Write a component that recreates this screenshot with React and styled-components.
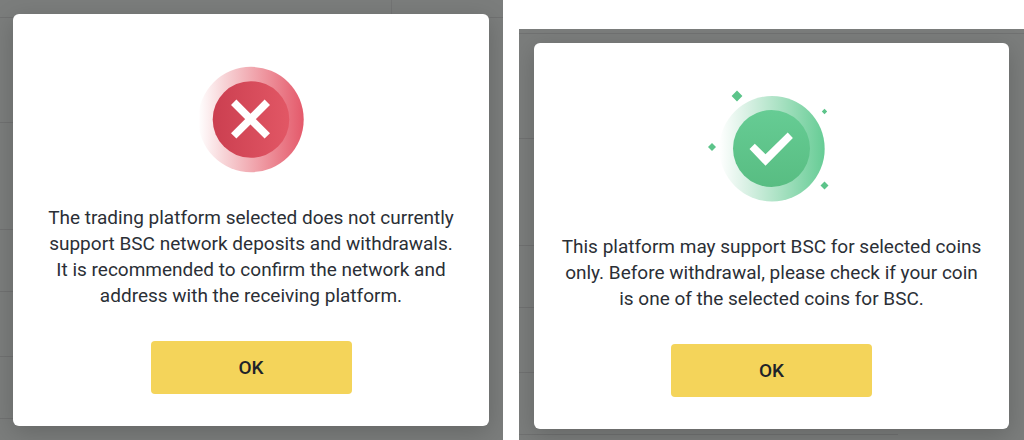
import React, { useId } from 'react'
import styled, { createGlobalStyle } from 'styled-components';


const GlobalStyle = createGlobalStyle`
    *, *::before, *::after {
        box-sizing: border-box;
    }
    body {
        margin: 0;
        background-color: #ffffff;
        font-family: Roboto, 'Liberation Sans', sans-serif;
    }
`

const Page = styled.main`
    display: grid;
    grid-template-columns: 503fr 505fr;
    column-gap: 16px;
    min-height: 100vh;
`

const Screen = styled.section`
    display: grid;
    grid-template-columns: minmax(0, 1fr);
    margin-top: ${props => props.$top}px;
    overflow: hidden;
    background-color: #7b7d7c;
`

const Listing = styled.div`
    grid-area: 1 / 1;
    height: 0;
`

const ListingHead = styled.div`
    display: flex;
    justify-content: flex-end;
    height: ${props => props.$height}px;
    border-bottom: 1px solid #707171;
`

const ListingCell = styled.div`
    width: 112px;
    border-left: 1px solid #737474;
`

const ListingRow = styled.div`
    width: 75%;
    height: ${props => props.$height}px;
    border-bottom: 1px solid #707171;
`

const Overlay = styled.div`
    grid-area: 1 / 1;
    z-index: 1;
    padding: 14px ${props => props.$right}px 11px ${props => props.$left}px;
`

const Dialog = styled.div`
    display: flex;
    flex-direction: column;
    align-items: center;
    padding: 53px 24px 32px;
    border-radius: 6px;
    background-color: #ffffff;
    box-shadow: 0 6px 24px rgba(0, 0, 0, 0.18);
`

const Icon = styled.svg`
    display: block;
    width: 106px;
    height: 106px;
    overflow: visible;
`

const Message = styled.p`
    margin: 32px 0;
    color: #2b2f36;
    font-size: 19px;
    line-height: 26px;
    text-align: center;
    white-space: nowrap;
`

const OkButton = styled.button`
    width: 201px;
    height: 53px;
    padding: 0;
    border: none;
    border-radius: 4px;
    background-color: #f4d45a;
    color: #1e2329;
    font-family: inherit;
    font-size: 19px;
    font-weight: 500;
    cursor: pointer;
`

const ErrorIcon = () => {
    const id = useId();

    return (
        <Icon viewBox="0 0 106 106" aria-hidden="true">
            <defs>
                <linearGradient id={`${id}ring`}>
                    <stop offset="0" stopColor="#ffffff" />
                    <stop offset="0.25" stopColor="#f7d3d6" />
                    <stop offset="0.6" stopColor="#ef9aa3" />
                    <stop offset="1" stopColor="#e4596a" />
                </linearGradient>
                <linearGradient id={`${id}disc`}>
                    <stop offset="0" stopColor="#cb3f50" />
                    <stop offset="1" stopColor="#e25765" />
                </linearGradient>
            </defs>
            <circle cx="53" cy="52.5" r="52.7" fill={`url(#${id}ring)`} />
            <circle cx="53" cy="52.5" r="38.3" fill={`url(#${id}disc)`} />
            <path d="M35.7 35.3 69.3 68.9M69.3 35.3 35.7 68.9" stroke="#ffffff" strokeWidth="7.6" />
        </Icon>
    )
}

const SuccessIcon = () => {
    const id = useId();

    return (
        <Icon viewBox="0 0 106 106" aria-hidden="true">
            <defs>
                <linearGradient id={`${id}ring`}>
                    <stop offset="0" stopColor="#ffffff" />
                    <stop offset="0.25" stopColor="#daf1e5" />
                    <stop offset="0.6" stopColor="#a5e0c0" />
                    <stop offset="1" stopColor="#66cc95" />
                </linearGradient>
                <linearGradient id={`${id}disc`} x2="0" y2="1">
                    <stop offset="0" stopColor="#66cc94" />
                    <stop offset="1" stopColor="#58bd82" />
                </linearGradient>
            </defs>
            <circle cx="53" cy="52.7" r="52.7" fill={`url(#${id}ring)`} />
            <circle cx="52.5" cy="52.5" r="38.5" fill={`url(#${id}disc)`} />
            <path d="M30.5 53 35.8 47.7 46.5 58.3 68.7 36.5 73.9 41.9 46.5 69.7z" fill="#ffffff" />
            <path
                d="M18-5.4 23.4 0 18 5.4 12.6 0zM105.5 12.8 108.2 15.5 105.5 18.2 102.8 15.5zM-7 47-3 51-7 55-11 51zM105.5 85.5 109.5 89.5 105.5 93.5 101.5 89.5z"
                fill="#5cc48a"
            />
        </Icon>
    )
}

const ROW_HEIGHTS = [105, 107, 62, 65, 62]

const Notice = ({ icon, lines, top, left, right, headHeight, hasColumns, id }) => {
    return (
        <Screen $top={top}>
            <Listing aria-hidden="true">
                <ListingHead $height={headHeight}>
                    {hasColumns && <ListingCell />}
                </ListingHead>
                {ROW_HEIGHTS.map((height, i) => <ListingRow key={i} $height={height} />)}
            </Listing>
            <Overlay $left={left} $right={right}>
                <Dialog role="alertdialog" aria-describedby={id}>
                    {icon}
                    <Message id={id}>
                        {lines.map((line, i) => (
                            <React.Fragment key={i}>
                                {i > 0 && <br />}
                                {line}
                            </React.Fragment>
                        ))}
                    </Message>
                    <OkButton type="button">OK</OkButton>
                </Dialog>
            </Overlay>
        </Screen>
    )
}

const App = () => {
    return (
        <>
        <GlobalStyle />
        <Page>
            <Notice
                id="unsupported"
                icon={<ErrorIcon />}
                top={0}
                left={13}
                right={14}
                headHeight={18}
                hasColumns
                lines={[
                    'The trading platform selected does not currently',
                    'support BSC network deposits and withdrawals.',
                    'It is recommended to confirm the network and',
                    'address with the receiving platform.',
                ]}
            />
            <Notice
                id="supported"
                icon={<SuccessIcon />}
                top={29}
                left={15}
                right={15}
                headHeight={5}
                lines={[
                    'This platform may support BSC for selected coins',
                    'only. Before withdrawal, please check if your coin',
                    'is one of the selected coins for BSC.',
                ]}
            />
        </Page>
        </>
    )
}

export default App;
